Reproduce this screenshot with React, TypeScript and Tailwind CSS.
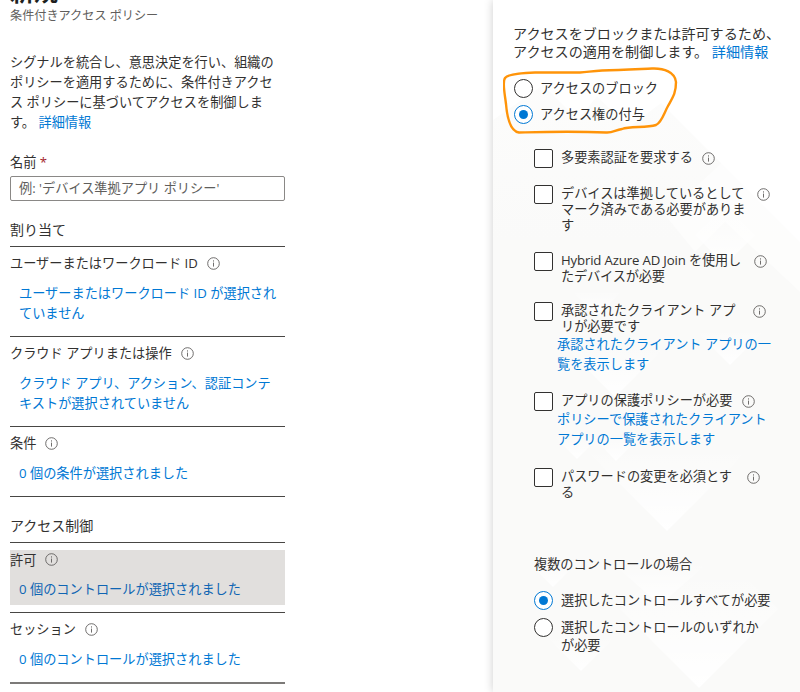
import { Fragment } from "react";
import { clsx } from "clsx";

interface PolicySection {
  label: string;
  value: string[];
  active?: boolean;
}

interface GrantControl {
  label: string[];
  link?: string[];
  // the label box is as wide as the info icon's offset needs
  labelClass: string;
  rowClass: string;
}

const ASSIGNMENTS: PolicySection[] = [
  { label: "ユーザーまたはワークロード ID", value: ["ユーザーまたはワークロード ID が選択され", "ていません"] },
  { label: "クラウド アプリまたは操作", value: ["クラウド アプリ、アクション、認証コンテ", "キストが選択されていません"] },
  { label: "条件", value: ["0 個の条件が選択されました"] },
];

const ACCESS_CONTROLS: PolicySection[] = [
  { label: "許可", value: ["0 個のコントロールが選択されました"], active: true },
  { label: "セッション", value: ["0 個のコントロールが選択されました"] },
];

const CONTROLS: GrantControl[] = [
  { label: ["多要素認証を要求する"], labelClass: "w-[141px]", rowClass: "h-9" },
  {
    label: ["デバイスは準拠しているとして", "マーク済みである必要がありま", "す"],
    labelClass: "w-[196px]",
    rowClass: "h-[67px]",
  },
  {
    label: ["Hybrid Azure AD Join を使用し", "たデバイスが必要"],
    labelClass: "w-[193px] tracking-[-0.15px]",
    rowClass: "h-[50px]",
  },
  {
    label: ["承認されたクライアント アプ", "リが必要です"],
    link: ["承認されたクライアント アプリの一", "覧を表示します"],
    labelClass: "w-[192px]",
    rowClass: "h-[90px]",
  },
  {
    label: ["アプリの保護ポリシーが必要"],
    link: ["ポリシーで保護されたクライアント", "アプリの一覧を表示します"],
    labelClass: "w-[181px] h-[17px]",
    rowClass: "h-[76px]",
  },
  { label: ["パスワードの変更を必須とす", "る"], labelClass: "w-[186px]", rowClass: "h-[86px]" },
];

function InfoIcon() {
  return (
    <svg className="size-[13px] shrink-0" viewBox="0 0 13 13" fill="none" stroke="#605e5c">
      <circle cx="6.5" cy="6.5" r="5.8" strokeWidth="0.9" />
      <path d="M6.5 5.600v4" strokeWidth="0.9" />
      <path d="M6.5 3.400v1.100" strokeWidth="1" />
    </svg>
  );
}

function Lines({ items }: { items: string[] }) {
  return (
    <>
      {items.map((line, i) => (
        <Fragment key={line}>
          {i > 0 && <br />}
          {line}
        </Fragment>
      ))}
    </>
  );
}

function Radio({ checked }: { checked?: boolean }) {
  return (
    <span
      className={clsx(
        "flex size-[19px] shrink-0 items-center justify-center rounded-full border bg-white",
        checked ? "border-[#0078d4]" : "border-[#323130]",
      )}
    >
      {checked && <span className="size-[9px] rounded-full bg-[#0078d4]" />}
    </span>
  );
}

function Section({ label, value, active }: PolicySection) {
  return (
    <section className={clsx("border-t border-[#484644]", active ? "pt-[7px]" : "pt-1.5")}>
      <div className={clsx(active && "bg-[#e1dfdd]")}>
        <div className={clsx("flex items-center gap-[9px]", active ? "h-[19px]" : "h-5")}>
          <span className="pt-0.5">{label}</span>
          <InfoIcon />
        </div>
        <p className={clsx("pt-2.5 pl-[9px] leading-5", active ? "pb-1.5 text-[#0f65b3]" : "pb-[13px] text-[#0078d4]")}>
          <Lines items={value} />
        </p>
      </div>
      {active && <div className="h-[7px]" />}
    </section>
  );
}

function PolicyForm() {
  return (
    <main className="w-[275px] text-[#323130]">
      <h1 className="-mt-[22px] h-7 text-2xl leading-7 font-bold text-[#201f1e]">新規</h1>
      <p className="h-[46px] text-[12.15px] leading-[19px] text-[#605e5c]">条件付きアクセス ポリシー</p>
      <p className="h-[100px] leading-5">
        <Lines
          items={[
            "シグナルを統合し、意思決定を行い、組織の",
            "ポリシーを適用するために、条件付きアクセ",
            "ス ポリシーに基づいてアクセスを制御しま",
          ]}
        />
        <br />
        す。 <a className="text-[#0078d4]">詳細情報</a>
      </p>
      <label className="block h-6 leading-5">
        名前 <span className="text-[#a4262c]">*</span>
      </label>
      <div className="flex h-[25px] items-center rounded-[2px] border border-[#8a8886] bg-white pl-2 text-[#605e5c]">
        例: 'デバイス準拠アプリ ポリシー'
      </div>
      <h2 className="h-[45px] pt-[19px] text-sm leading-5">割り当て</h2>
      {ASSIGNMENTS.map((s) => (
        <Section key={s.label} {...s} />
      ))}
      <h2 className="h-[46px] border-t border-[#484644] pt-[19px] text-sm leading-5">アクセス制御</h2>
      {ACCESS_CONTROLS.map((s) => (
        <Section key={s.label} {...s} />
      ))}
      <div className="h-0.5 bg-[#7c7a78]" />
    </main>
  );
}

// Faint tiled diamonds behind the grant panel
function PanelPattern() {
  return (
    <svg className="absolute inset-0 size-full" viewBox="0 0 307 692" preserveAspectRatio="none">
      <defs>
        <linearGradient id="base" x1="0" y1="70" x2="0" y2="240" gradientUnits="userSpaceOnUse">
          <stop offset="0" stopColor="#fafaf9" stopOpacity="0.5" />
          <stop offset="1" stopColor="#fafaf9" />
        </linearGradient>
        <linearGradient id="fade" x1="0" y1="0" x2="0" y2="1">
          <stop offset="0" stopColor="#fff" stopOpacity="0" />
          <stop offset="1" stopColor="#fff" />
        </linearGradient>
      </defs>
      <path d="M0 120 50 85 85 120 104 96 135 128 168 103 307 242V692H0Z" fill="url(#base)" />
      <path d="M232 222 307 292V692H157V297Z" fill="#fafaf9" />
      <path d="M232 160 307 235V292L232 222 202 252 172 215Z" fill="#fff" opacity="0.5" />
      <g fill="url(#fade)">
        <path d="M202 235 232 265 262 235 232 205Z" />
        <path d="M78 290 104 316 130 290Z" />
        <path d="M70 345 122 397 174 345Z" />
        <path d="M202 330 237 365 272 330Z" />
        <path d="M90 447H258L174 531Z" />
        <path d="M60 435 84 459 108 435Z" />
        <path d="M98 435 123 461 149 435Z" />
        <path d="M35 562H85L60 587Z" />
        <path d="M118 562H216L167 605Z" />
        <path d="M127 609 167 570H246L285 609 206 688Z" />
        <path d="M53 636H123L88 671Z" />
      </g>
    </svg>
  );
}

function GrantPanel() {
  return (
    <aside className="relative h-[692px] w-[307px] bg-white text-[#323130] shadow-[0_0_9px_rgba(0,0,0,0.2)]">
      <PanelPattern />
      <div className="relative pt-[25px] pl-[21px]">
        <p className="-ml-px h-[54px] text-[14.1px] leading-[18px]">
          アクセスをブロックまたは許可するため、
          <br />
          アクセスの適用を制御します。 <a className="text-[#0078d4]">詳細情報</a>
        </p>
        <div className="flex h-[70px] flex-col gap-[7px] leading-[19px]">
          <div className="flex items-center gap-[7px]">
            <Radio />
            アクセスのブロック
          </div>
          <div className="flex items-center gap-[7px]">
            <Radio checked />
            アクセス権の付与
          </div>
        </div>
        <div className="pl-5">
          {CONTROLS.map((c) => (
            <div key={c.label[0]} className={clsx("flex gap-2", c.rowClass)}>
              <span className="size-[19px] shrink-0 rounded-[2px] border border-[#323130] bg-white" />
              <div>
                <div className="flex">
                  <p className={clsx("leading-4", c.labelClass)}>
                    <Lines items={c.label} />
                  </p>
                  <span className="mt-[3px] h-[13px]">
                    <InfoIcon />
                  </span>
                </div>
                {c.link && (
                  <p className="-ml-1 leading-5 text-[#0078d4]">
                    <Lines items={c.link} />
                  </p>
                )}
              </div>
            </div>
          ))}
          <p className="h-[37px] leading-5">複数のコントロールの場合</p>
          <div className="flex h-[27px] gap-2">
            <Radio checked />
            <p className="leading-[19px]">選択したコントロールすべてが必要</p>
          </div>
          <div className="flex gap-2">
            <Radio />
            <p className="leading-[18px]">
              選択したコントロールのいずれか
              <br />
              が必要
            </p>
          </div>
        </div>
      </div>
      {/* Hand-drawn highlight round the two access options */}
      <svg className="absolute top-[60px] left-2.5 h-20 w-[180px]" viewBox="503 60 180 80" fill="none">
        <path
          d="M505 78C508 74 520 73 535 72.500H580C588 72 592 71 602 70.500C620 70 640 69 652 68.500C664 68 675 72 676 82C676 93 673 97 668 106C664 113 662 122 656 125C646 128 630 126 622 129C615 130 613 133 606 132.500C570 131 540 132 519 132.500C510 131 507 116 506 104C505 95 502 82 505 78Z"
          stroke="#ff9409"
          strokeWidth="2.400"
          strokeLinejoin="round"
        />
      </svg>
    </aside>
  );
}

export default function App() {
  return (
    <div className="flex h-[692px] w-[800px] justify-between overflow-hidden bg-white pl-2.5 font-['Open_Sans','Noto_Sans_CJK_JP',sans-serif] text-[13.2px] whitespace-nowrap">
      <PolicyForm />
      <GrantPanel />
    </div>
  );
}
